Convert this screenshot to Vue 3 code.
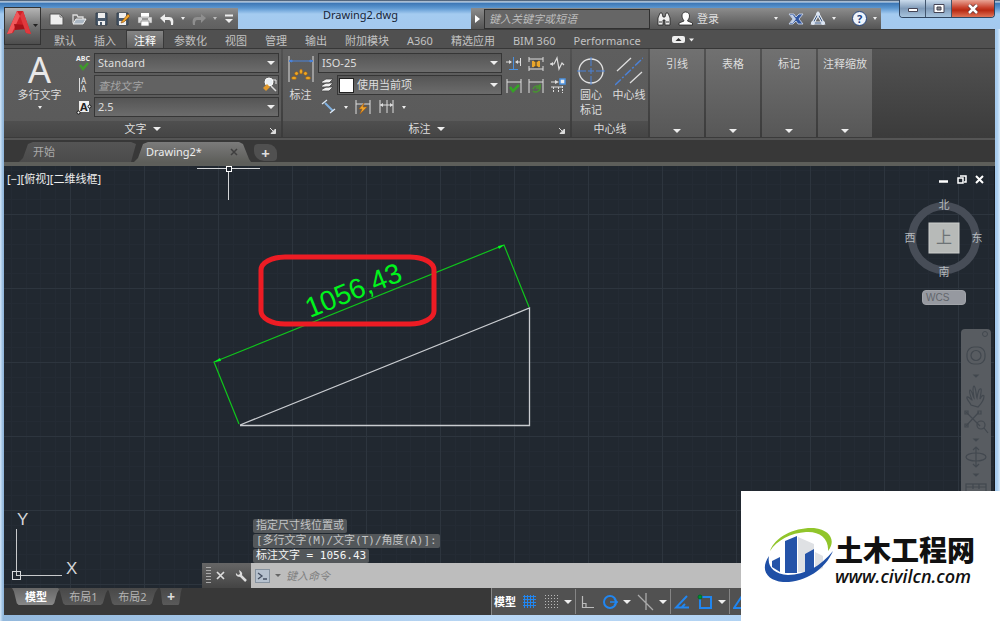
<script setup>
import { ref } from 'vue'

const tabs = ['默认', '插入', '注释', '参数化', '视图', '管理', '输出', '附加模块', 'A360', '精选应用', 'BIM 360', 'Performance']
const activeTab = ref('注释')
const collapsed = ['引线', '表格', '标记', '注释缩放']
const history = ['指定尺寸线位置或', '[多行文字(M)/文字(T)/角度(A)]:', '标注文字 = 1056.43']
const layouts = ['模型', '布局1', '布局2']
const activeLayout = ref('模型')
</script>

<template>
  <div class="window">
    <header class="header">
      <button class="app-button" aria-label="应用程序菜单">
        <svg width="36" height="37" viewBox="0 0 36 37">
          <path d="M2 26L12 3h6l8 23-5-1-2-5H11l-3 5z" fill="#cf2027" />
          <path d="M12 3l3 5-8 17-5 1z" fill="#f0575a" />
          <path d="M10 20l-1-4 12 1 1 4-12 1z" fill="#a51219" />
          <path d="M15 8l3-5 8 23-5-1z" fill="#e0383d" />
          <path d="M28 16h5l-2.500 3z" fill="#222" />
        </svg>
      </button>

      <div class="titlebar">
        <div class="quick">
          <button aria-label="新建"><svg width="16" height="16"><path d="M1 3h10l3 3v8H1z" fill="#eee" stroke="#555" /><path d="M11 3v3h3" fill="none" stroke="#777" /></svg></button>
          <button aria-label="打开"><svg width="16" height="16"><path d="M2 12V4h4l1 2h5v2" fill="none" stroke="#ddd" stroke-width="1.3" /><path d="M2 13l3-5h10l-3 5z" fill="#aab6c2" stroke="#eee" /></svg></button>
          <button aria-label="保存"><svg width="16" height="16"><path d="M3 2h11v12H3z" fill="#4a5a6c" stroke="#35404d" /><path d="M5 2h7v5H5zM5 10h7v4H5z" fill="#eee" /><path d="M7 11h2v3H7z" fill="#4a5a6c" /></svg></button>
          <button aria-label="另存为"><svg width="16" height="16"><path d="M2 2h11v12H2z" fill="#4a5a6c" stroke="#35404d" /><path d="M4 2h7v5H4zM4 10h7v4H4z" fill="#eee" /><path d="M7 10l6-7 2 2-6 6-3 1z" fill="#efa52c" stroke="#8c4e11" stroke-width=".6" /></svg></button>
          <button aria-label="打印"><svg width="16" height="16"><path d="M4 2h8v4H4z" fill="#fff" /><path d="M1 6h14v6H1z" fill="#ddd" stroke="#777" stroke-width=".5" /><path d="M4 10h8v5H4z" fill="#fff" stroke="#777" stroke-width=".7" /><path d="M5 8h6" stroke="#555" /></svg></button>
          <button aria-label="放弃"><svg width="16" height="16"><path d="M1 7l5-4v3h4c4 0 5 3 4 8h-2c0-3 0-5-3-5H6v3z" fill="#eee" /></svg></button>
          <i class="tri small"></i>
          <button aria-label="重做"><svg width="16" height="16"><path d="M15 7l-5-4v3H6c-4 0-5 3-4 8h2c0-3 0-5 3-5h3v3z" fill="#8f8f8f" /></svg></button>
          <i class="tri small dim"></i>
          <button class="narrow" aria-label="自定义"><svg width="12" height="16"><path d="M2 4.500h8" stroke="#eee" stroke-width="2" /><path d="M2 8h8l-4 4z" fill="#eee" /></svg></button>
        </div>
        <h1 class="title">Drawing2.dwg</h1>
        <div class="info">
          <button class="info-arrow" aria-label="展开搜索"><svg width="6" height="8"><path d="M0 0v8l5-4z" fill="#fff" /></svg></button>
          <input class="search" type="search" aria-label="搜索" placeholder="键入关键字或短语" />
          <button aria-label="查找"><svg width="16" height="16"><path d="M2 14V7l2-5h2l1 4h2l1-4h2l2 5v7H9V9H7v5z" fill="#eee" stroke="#222" stroke-width=".8" /><path d="M3 11h3M10 11h3" stroke="#333" /></svg></button>
          <button class="login"><svg width="15" height="16"><path d="M7.500 1c3 0 4 2 4 4 0 3-2 4-2 5l5 2v2H1v-2l5-2c0-1-2-2-2-5 0-2 1-4 3.500-4z" fill="#fff" stroke="#222" stroke-width=".8" /></svg>登录</button>
          <i class="tri small"></i>
          <button class="exchange" aria-label="交换"><svg width="16" height="16"><path d="M1 3h5l2 3 3-3h4l-4 5 4 5h-5l-2-3-3 3H1l4-5z" fill="#2f55a0" stroke="#c9d5ea" stroke-width=".9" /><path d="M2 4h3l3 4-3 4H2l3-4z" fill="#c3d0e6" /></svg></button>
          <button aria-label="连接"><svg width="16" height="16"><path d="M8 3l5 9H3z" fill="none" stroke="#e8eef7" stroke-width="3" /><path d="M8 3l5 9H3z" fill="none" stroke="#34527e" stroke-width="1" /><circle cx="8" cy="3" r="2" fill="#dce5f3" /><circle cx="3" cy="12" r="2" fill="#dce5f3" /><circle cx="13" cy="12" r="2" fill="#dce5f3" /></svg></button>
          <i class="tri small"></i>
          <button class="help" aria-label="帮助"><span>?</span></button>
          <i class="tri small"></i>
        </div>
        <div class="win-controls">
          <button aria-label="最小化"><svg width="12" height="8"><path d="M1.500 3.500h9v3h-9z" fill="#fff" stroke="#445" /></svg></button>
          <button aria-label="最大化"><svg width="12" height="10"><path d="M1 .5h10v8H1z" fill="#fff" stroke="#445" /><path d="M4 3h4v3H4z" fill="#888" stroke="#445" /></svg></button>
          <button class="close" aria-label="关闭"><svg width="12" height="10"><path d="M2 1l8 8M10 1L2 9" stroke="#633" stroke-width="4" /><path d="M2 1l8 8M10 1L2 9" stroke="#fff" stroke-width="2.500" /></svg></button>
        </div>
      </div>

      <nav class="tabs">
        <button v-for="t in tabs" :key="t" :class="{ active: t === activeTab }" @click="activeTab = t">{{ t }}</button>
        <button class="tab-toggle" aria-label="最小化功能区"><svg width="24" height="8"><rect x="0" y="0" width="13" height="7" rx="2" fill="#eee" /><path d="M3.500 5h6l-3-3z" fill="#333" /><path d="M17 2.500h5l-2.500 3z" fill="#eee" /></svg></button>
      </nav>
    </header>

    <section class="ribbon">
      <div class="panel text-panel">
        <div class="panel-body">
          <button class="big mtext">
            <span class="big-a">A</span><span>多行文字</span><i class="tri small"></i>
          </button>
          <div class="fields">
            <div class="field">
              <svg width="18" height="18"><text x="1" y="7" font-size="7" font-weight="700" fill="#eee">ABC</text><path d="M5 11l3 4 5-6" fill="none" stroke="#3f9a2b" stroke-width="2.500" /></svg>
              <span class="select"><select aria-label="文字样式"><option>Standard</option></select></span>
            </div>
            <div class="field">
              <svg width="18" height="18"><path d="M4.500 2v14" stroke="#ddd" /><text x="6" y="8" font-size="8" fill="#eee">A</text><text x="6" y="16" font-size="8" fill="#eee">A</text></svg>
              <span class="find"><input type="text" aria-label="查找文字" placeholder="查找文字" /><svg width="16" height="16"><circle cx="7" cy="5" r="4" fill="#e9eef2" stroke="#fff" /><path d="M9 9l5 5" stroke="#ddd" stroke-width="1.500" /><path d="M1 11l4-4 3 3-4 4z" fill="#e0982b" /><path d="M11 3h3v4" stroke="#eee" fill="none" /></svg></span>
            </div>
            <div class="field">
              <svg width="18" height="18"><rect x="4" y="3" width="10" height="11" fill="#eee" /><text x="5" y="13" font-size="11" font-weight="700" fill="#222">A</text><circle cx="3.500" cy="14.500" r="1.500" fill="#fff" stroke="#111" /><circle cx="14.500" cy="8.500" r="1.500" fill="#fff" stroke="#111" /></svg>
              <span class="select"><select aria-label="文字高度"><option>2.5</option></select></span>
            </div>
          </div>
        </div>
        <footer class="panel-title">文字<i class="tri"></i><svg class="launch" width="6" height="6"><path d="M0 0l4 4M5.500 1v4.500H1z" stroke="#ddd" fill="#ddd" /></svg></footer>
      </div>

      <div class="panel dim-panel">
        <div class="panel-body">
          <button class="big dimension">
            <svg width="28" height="32"><path d="M2 3v26M26 3v26" stroke="#ddd" /><path d="M2 8h24M2 8l3-1v2zM26 8l-3-1v2z" stroke="#4b82d8" fill="#4b82d8" /><g fill="#f0a822" stroke="#9c5d10" stroke-width=".5"><ellipse cx="14" cy="18.500" rx="1.500" ry="2.500" /><circle cx="9.500" cy="20.500" r="1.800" /><circle cx="18.500" cy="20.500" r="1.800" /><ellipse cx="7" cy="25" rx="2.500" ry="1.500" /><ellipse cx="21" cy="25" rx="2.500" ry="1.500" /></g></svg>
            <span>标注</span>
          </button>
          <div class="dim-fields">
            <span class="select"><select aria-label="标注样式"><option>ISO-25</option></select></span>
            <div class="field">
              <svg width="18" height="18"><path d="M3 14l5-3h7l-4 4H4zM3 10l5-3h7l-4 4H4zM3 6l5-3h7l-4 4H4z" fill="#f1f1f1" stroke="#444" stroke-width=".8" /></svg>
              <span class="select layer"><i class="swatch"></i><select aria-label="标注图层"><option>使用当前项</option></select></span>
            </div>
            <div class="dim-tools">
              <button aria-label="线性"><svg width="18" height="18"><path d="M5 5l8 8" stroke="#7fb0e0" stroke-width="2" /><path d="M2 6l5-4M10 15l5-4" stroke="#dce8f4" stroke-width="1.300" /></svg></button>
              <i class="tri small"></i>
              <button aria-label="快速标注"><svg width="18" height="18"><path d="M2 2v14M16 2v14M2 6h14" stroke="#ddd" /><path d="M10 5l-5 6h3l-2 5 7-7h-4z" fill="#efa52c" stroke="#a75b0e" stroke-width=".6" /></svg></button>
              <button aria-label="连续"><svg width="18" height="18"><path d="M2 2v13M9 2v13M15 2v13M2 7h13" stroke="#ddd" /><path d="M2 7l3-2v4zM15 7l-3-2v4z" fill="#ddd" /></svg></button>
              <i class="tri small"></i>
            </div>
          </div>
          <div class="icon-grid">
            <button aria-label="打断"><svg width="16" height="16"><path d="M0 6h5M10 6h4M14.500 2v8" stroke="#ddd" /><path d="M3 4l3 2-3 2zM12 4L9 6l3 2z" fill="#ddd" /><path d="M7.500 1v12M3 13.500h9" stroke="#4b91df" /></svg></button>
            <button aria-label="调整间距"><svg width="16" height="16"><path d="M1 1v5M15 1v5M1 3h14M1 10v5M15 10v5M1 13h14" stroke="#ddd" /><path d="M4 5h8v6H4z" fill="#e9a62b" /><path d="M8 5v6M6 5h4M6 11h4" stroke="#333" /></svg></button>
            <button aria-label="折弯标注"><svg width="16" height="16"><path d="M0 8h4l3-6 2 11 3-6 2 2" fill="none" stroke="#ddd" stroke-width="1.200" /><path d="M0 8l3-2v4z" fill="#ddd" /></svg></button>
            <button aria-label="检验"><svg width="16" height="16"><path d="M1 1v14M15 1v14M1 4h14" stroke="#ddd" /><path d="M4 9l3 4 6-6" fill="none" stroke="#35a326" stroke-width="2.500" /></svg></button>
            <button aria-label="更新"><svg width="16" height="16"><path d="M1 1v14M15 1v14M1 4h14" stroke="#ddd" /><path d="M5 11c1-3 5-4 7-2M12 11c-1 3-5 4-7 2M12 6v4H8" fill="none" stroke="#47972f" stroke-width="1.500" /></svg></button>
            <button aria-label="重新关联"><svg width="16" height="16"><path d="M1 4h6M1 9h12" stroke="#ddd" /><path d="M3.500 9v6M8.500 9v6M12.500 8v7" stroke="#ddd" stroke-dasharray="2 1" /><path d="M5 2l4 2-4 2z" fill="#ddd" /><path d="M10 1h5v5h-5z" fill="#eee" stroke="#4b91df" stroke-width="1.500" /></svg></button>
          </div>
        </div>
        <footer class="panel-title">标注<i class="tri"></i><svg class="launch" width="6" height="6"><path d="M0 0l4 4M5.500 1v4.500H1z" stroke="#ddd" fill="#ddd" /></svg></footer>
      </div>

      <div class="panel center-panel">
        <div class="panel-body">
          <button class="big"><svg width="28" height="33"><circle cx="14" cy="18" r="12" fill="none" stroke="#e2e2e2" stroke-width="1.300" /><path d="M0 18h9M11 18h6M19 18h9M14 4v9M14 15v6M14 23v9" stroke="#4b82d8" /></svg><span>圆心<br />标记</span></button>
          <button class="big"><svg width="28" height="33"><path d="M2 18L16 5M15 30L27 19" stroke="#ddd" stroke-width="1.300" /><path d="M0 32L28 5" stroke="#4b82d8" stroke-width="1.500" stroke-dasharray="8 2 2 2" /></svg><span>中心线</span></button>
        </div>
        <footer class="panel-title">中心线</footer>
      </div>

      <button v-for="c in collapsed" :key="c" class="collapsed"><span>{{ c }}</span><i class="tri"></i></button>
    </section>

    <nav class="doc-tabs">
      <button class="doc start">开始</button>
      <button class="doc current">Drawing2*<svg width="8" height="8"><path d="M1 1l6 6M7 1L1 7" stroke="#3f3f3f" stroke-width="1.500" /></svg></button>
      <button class="doc-add" aria-label="新图形">+</button>
    </nav>

    <main class="canvas">
      <svg class="drawing">
        <defs>
          <pattern id="grid" width="74" height="74" patternUnits="userSpaceOnUse" x="70" y="66">
            <path d="M15.500 0v74M30.500 0v74M44.500 0v74M59.500 0v74M0 15.500h74M0 30.500h74M0 44.500h74M0 59.500h74" stroke="#242b34" />
            <path d="M.5 0v74M0 .5h74" stroke="#2d353e" />
          </pattern>
        </defs>
        <g transform="translate(-4 -166)">
          <rect x="4" y="166" width="100%" height="100%" fill="url(#grid)" />
          <path d="M240 425L529.500 308V425.500H240" fill="none" stroke="#c9ccd0" stroke-width="1.300" />
          <path d="M239 424L214 362L504 245L529 307" fill="none" stroke="#10c51c" stroke-width="1.200" />
          <path d="M214 362l6-4 1 3zM504 245l-6 1 1 3z" fill="#00ff1e" />
          <text class="dim-text" transform="translate(310 318) rotate(-22)">1056,43</text>
          <rect x="261" y="257" width="173" height="67" rx="24" ry="13" fill="none" stroke="#ed1c24" stroke-width="5" />
          <path d="M197 168.500h29M232 168.500h28M228.500 172v28" stroke="#d4d6d8" />
          <rect x="226.500" y="166.500" width="5" height="5" fill="none" stroke="#fff" />
          <path d="M16.500 529v46M16 575.500h46" stroke="#c8cacc" />
          <rect x="12.500" y="571.500" width="8" height="8" fill="none" stroke="#d8dadc" />
          <text class="axis" x="17" y="525">Y</text>
          <text class="axis" x="66" y="574">X</text>
        </g>
      </svg>
      <div class="view-label">[−][俯视][二维线框]</div>
      <div class="view-controls">
        <button aria-label="最小化视口"><svg width="10" height="10"><path d="M0 6.500h9" stroke="#fff" stroke-width="2.500" /></svg></button>
        <button aria-label="还原视口"><svg width="10" height="10"><path d="M1 3h5v5H1zM3 1h6v6H7" fill="none" stroke="#fff" stroke-width="1.500" /></svg></button>
        <button aria-label="关闭视口"><svg width="10" height="10"><path d="M1 1l7 7M8 1L1 8" stroke="#fff" stroke-width="2" /></svg></button>
      </div>
      <div class="viewcube">
        <svg width="80" height="80">
          <circle cx="40" cy="40" r="32" fill="none" stroke="#474d57" stroke-width="8" />
          <g class="compass"><text x="40" y="11">北</text><text x="6" y="44">西</text><text x="73" y="44">东</text><text x="40" y="78">南</text></g>
          <rect x="25" y="25" width="30" height="30" fill="#b7bab8" stroke="#cbcdcb" />
          <text x="40" y="45" class="cube-face">上</text>
        </svg>
        <button class="wcs">WCS</button>
      </div>
      <div class="navbar">
        <svg width="30" height="200" fill="none" stroke="#42484f" stroke-width="1.200">
          <circle cx="24" cy="5" r="2.500" stroke-width="1" />
          <rect x="6" y="18" width="18" height="17" rx="7" /><circle cx="15" cy="26.500" r="5" />
          <path d="M13 46h4l-2 2z" fill="#3e444b" />
          <path d="M10 76c-2-4-5-6-4-8 2-1 4 3 5 3-2-5-3-9-2-10 2 0 3 7 4 8-1-6-2-11 0-12 2 1 2 10 3 12 1-6 2-10 4-9 1 1-1 8-1 10 2-4 3-4 4-3 0 4-4 9-6 11z" />
          <path d="M5 83l14 14M18 83L5 97" /><circle cx="20" cy="96" r="4" /><path d="M23 99l4 5M4 82h3v3H4zM17 82h3v3h-3zM4 95h3v3H4z" />
          <path d="M13 110h4l-2 2z" fill="#3e444b" />
          <path d="M15 118v20M12 121l3-3 3 3M12 135l3 3 3-3" /><ellipse cx="15" cy="128" rx="10" ry="4" />
          <path d="M13 145h4l-2 2z" fill="#3e444b" />
          <rect x="5" y="155" width="20" height="14" /><path d="M5 158h20M12 155v5M18 155v5" />
        </svg>
      </div>
      <div class="command">
        <p v-for="line in history" :key="line"><span>{{ line }}</span></p>
        <div class="command-bar">
          <div class="command-tools">
            <i class="grip"></i>
            <button aria-label="关闭命令行"><svg width="9" height="9"><path d="M1 1l7 7M8 1L1 8" stroke="#ddd" stroke-width="1.700" /></svg></button>
            <button aria-label="自定义"><svg width="14" height="14"><path d="M6 6l6 6" stroke="#ddd" stroke-width="2.500" /><path d="M2 4c-1 4 5 5 6 2 1-2-1-4-3-5l1 4-2 1z" fill="#ddd" /></svg></button>
          </div>
          <svg width="16" height="14"><rect x=".5" y=".5" width="14" height="13" fill="#b6c1ce" stroke="#8793a0" /><path d="M3 4l4 3-4 3M8 10h4" fill="none" stroke="#444e60" stroke-width="1.300" /></svg>
          <i class="tri small dark"></i>
          <input type="text" aria-label="命令" placeholder="键入命令" />
        </div>
      </div>
    </main>

    <footer class="statusbar">
      <nav class="layouts">
        <button v-for="l in layouts" :key="l" :class="{ active: l === activeLayout }" @click="activeLayout = l">{{ l }}</button>
        <button class="add" aria-label="新布局">+</button>
      </nav>
      <div class="status">
        <button class="model">模型</button>
        <button aria-label="栅格"><svg width="16" height="16"><path d="M1 2.500h13M1 5.500h13M1 8.500h13M1 11.500h13M2.500 1v13M5.500 1v13M8.500 1v13M11.500 1v13" stroke="#2186f0" /></svg></button>
        <button class="snap" aria-label="捕捉"><svg width="16" height="16"><path d="M1 1.500h14M1 4.500h14M1 7.500h14M1 10.500h14M1 13.500h14" stroke="#bbb" stroke-dasharray="1 2" /></svg></button>
        <i class="tri"></i><i class="sep"></i>
        <button aria-label="正交"><svg width="16" height="16"><path d="M3.500 2v11.500H15M3 9.500h4v4" fill="none" stroke="#bbb" stroke-width="1.200" /></svg></button>
        <button class="polar" aria-label="极轴追踪"><svg width="16" height="16"><circle cx="7" cy="8" r="6" fill="none" stroke="#2186f0" stroke-width="2" /><path d="M7 8h8M11 5l3 3-3 3" fill="none" stroke="#2186f0" stroke-width="1.300" /></svg></button>
        <i class="tri"></i>
        <button class="iso" aria-label="等轴测"><svg width="18" height="18"><path d="M1 2l15 15M9 0v17" stroke="#aaa" stroke-width="1.300" /></svg></button>
        <i class="tri"></i><i class="sep"></i>
        <button aria-label="对象捕捉追踪"><svg width="16" height="16"><path d="M13 2L2 13.500h13M11 10l-3 3" fill="none" stroke="#2186f0" stroke-width="2" /></svg></button>
        <button class="osnap" aria-label="对象捕捉"><svg width="18" height="16"><rect x="4" y="3" width="11" height="11" fill="none" stroke="#2186f0" stroke-width="2" /><circle cx="4" cy="3" r="2" fill="#092" stroke="#063" /></svg></button>
        <i class="tri"></i><i class="sep"></i>
        <button aria-label="注释可见性"><svg width="16" height="16"><path d="M1 14L9 2l5 12z" fill="none" stroke="#2186f0" stroke-width="2" /></svg></button>
      </div>
    </footer>

    <a class="brand" href="#" aria-label="土木工程网">
      <svg width="72" height="60" viewBox="0 0 72 60">
        <path d="M35 11l16 7v7l-5 3v18H35z" fill="#dfe1e4" />
        <path d="M52 26l8 4v12l-8 4z" fill="#dfe1e4" />
        <path d="M9 35l8-4v15l-8-5zM22 15l12-5v37H22zM42 28l9-5v22l-9 2z" fill="#2453a8" />
        <path d="M7 25C12 10 33 1 51 2c17 2 22 13 14 23C66 12 56 5 43 6 28 7 14 14 7 25z" fill="#91c52b" />
        <path d="M6 30C-3 43 3 54 20 56c21 1 42-12 50-31C58 40 42 49 25 49 11 48 4 41 6 30z" fill="#1e4fa6" />
      </svg>
      <span class="brand-text"><strong>土木工程网</strong><em>www.civilcn.com</em></span>
    </a>
  </div>
</template>

<style>
body { margin: 0; background: #b9d3ee; }
</style>

<style scoped>
* { box-sizing: border-box; }
.window {
  position: relative;
  display: flex;
  flex-direction: column;
  min-height: 100vh;
  padding: 0 5px 6px 4px;
  overflow: hidden;
  background: linear-gradient(90deg, #d2e6f8, #93b8dc 3px, #b9d7f5 50%, #a8cdf0 calc(100% - 3px), #d9ecfc);
  color: #dedede;
  font: 12px/14px "Noto Sans", "Noto Sans CJK SC", sans-serif;
}
button { border: 0; padding: 0; background: none; color: inherit; font: inherit; display: flex; align-items: center; justify-content: center; }
button svg { flex: none; }
input, select { font: inherit; color: inherit; min-width: 0; border-radius: 0; }
.tri { flex: none; width: 0; height: 0; border: 4px solid transparent; border-top: 4px solid #eee; border-bottom: 0; }
.tri.small { border-width: 3px 2px 0; }
.tri.dim { opacity: .6; }
.tri.dark { border-width: 3px 3px 0; border-top-color: #666; }

.header { display: grid; grid-template: 29px 19px / 37px 1fr; margin: 0 -5px 0 -4px; padding: 0 5px 0 4px; background: linear-gradient(#293e58, #d4e5f6 2px, #3c76b4 3px, #5b96d0 8px, #a4cbf0 14px, #a4c9ee 29px, transparent 29px); }
.app-button { grid-area: 1 / 1 / 3 / 2; align-self: start; z-index: 1; margin-top: 7px; height: 38px; border: 1px solid #333; background: linear-gradient(#b5b5b5, #747474 50%, #4d4d4d); }
.titlebar { grid-area: 1 / 2; display: flex; align-items: flex-start; }
.quick { display: flex; align-items: center; justify-content: space-between; width: 197px; height: 21px; margin-top: 8px; padding: 0 3px 0 8px; background: linear-gradient(#8f8f8f, #666 60%, #606060); }
.title { flex: 1; margin: 7px 0 0 12px; text-align: center; font-size: 11px; line-height: 16px; font-weight: 400; color: #172436; }
.info { display: flex; align-items: center; gap: 6px; width: 410px; height: 21px; margin-top: 8px; padding-right: 4px; background: linear-gradient(#8c8c8c, #646464 70%, #555); font-size: 11px; }
.info-arrow { width: 6px; margin: 0 0 0 4px; }
.search { width: 166px; height: 20px; margin-left: -3px; padding: 0 4px; border: 1px solid #303030; background: #666; font-style: italic; }
.search::placeholder { color: #bcbcbc; opacity: 1; }
.login { gap: 4px; margin: 0 auto 0 0; }
.exchange { margin-left: 4px; }
.help { width: 15px; height: 15px; margin-left: 10px; border-radius: 50%; border: 1px solid #25457e; background: #eef4fc; color: #1c3f82; font-weight: 700; }
.win-controls { display: flex; height: 18px; margin-left: 18px; border: 1px solid #304661; border-top: 0; border-radius: 0 0 4px 4px; overflow: hidden; }
.win-controls button { width: 26px; background: linear-gradient(#cadbec, #7f9ab8 50%, #a7c4de); border-right: 1px solid #42566e; }
.win-controls .close { width: 42px; border: 0; background: linear-gradient(#e9a596, #c8412c 45%, #b82912 60%, #df7356); }
.tabs { grid-area: 2 / 1 / 3 / 3; display: flex; padding-left: 41px; background: #505050; border-top: 1px solid #3c3c3c; color: #c2c2c2; font-size: 11px; }
.tabs button { margin: 0 1px; padding: 3px 7px 0; border: 1px solid transparent; border-bottom: 0; white-space: nowrap; }
.tabs .active { background: linear-gradient(#858585, #606060); border-color: #393939; color: #fff; }
.tabs .tab-toggle { padding: 0 20px; }

.ribbon { display: flex; gap: 2px; height: 90px; padding-bottom: 1px; background: linear-gradient(#525252, #3b3b3b); border-top: 1px solid #373737; font-size: 11px; }
.panel { display: flex; flex-direction: column; background: linear-gradient(#5e5e5e, #5a5a5a); }
.text-panel { width: 277px; }
.dim-panel { width: 287px; }
.center-panel { width: 76px; }
.panel-body { display: flex; flex: 1; padding-top: 4px; }
.panel-title { display: flex; position: relative; align-items: center; justify-content: center; gap: 6px; height: 16px; background: linear-gradient(#4f4f4f, #454545); }
.launch { position: absolute; right: 5px; bottom: 3px; }
.big { flex-direction: column; justify-content: flex-start; }
.mtext { width: 71px; }
.big-a { height: 35px; font: 36px/34px "Noto Sans", sans-serif; color: #e8e8e8; }
.mtext .tri { margin-top: 4px; }
.fields { display: flex; flex: 1; flex-direction: column; gap: 2px; padding-right: 2px; }
.field { display: flex; gap: 1px; align-items: center; }
.select { position: relative; display: flex; flex: 1; align-items: center; height: 20px; border: 1px solid #363636; background: linear-gradient(#555, #6c6c6c); }
.select::after { content: ""; position: absolute; right: 3px; top: 7px; border: 4px solid transparent; border-top-color: #eee; border-bottom: 0; }
.select select { flex: 1; width: 100%; height: 18px; padding: 0 3px; appearance: none; border: 0; background: none; }
.find { display: flex; flex: 1; align-items: center; height: 20px; border: 1px solid #3b3b3b; background: #626262; }
.find input { flex: 1; height: 18px; padding: 0 3px; border: 0; background: none; font-style: italic; }
.find input::placeholder { color: #a5a5a5; opacity: 1; }
.dimension { width: 35px; }
.dimension span { margin-top: 3px; }
.dim-fields { display: flex; flex-direction: column; gap: 2px; width: 184px; }
.dim-fields > .select { flex: 0 0 20px; }
.swatch { flex: none; width: 15px; height: 15px; margin-left: 1px; border: 1px solid #222; background: #fff; }
.dim-tools { display: flex; align-items: center; gap: 6px; height: 20px; padding-left: 2px; }
.icon-grid { display: grid; grid-template: 22px 22px / 22px 22px 22px; margin-left: 1px; }
.center-panel .big { flex: 1; line-height: 15px; }
.center-panel .big span { margin-top: 1px; white-space: nowrap; }
.collapsed { flex-direction: column; justify-content: space-between; width: 54px; padding: 8px 0 4px; background: linear-gradient(#717171, #575757); white-space: nowrap; }

.doc-tabs { display: flex; align-items: flex-end; height: 28px; padding-left: 15px; border-top: 2px solid #555; border-bottom: 4px solid #5d5e5a; background: #383838; }
.doc { height: 20px; font-size: 11px; background: linear-gradient(#555, #4b4b4b); }
.start { justify-content: flex-start; width: 117px; padding-left: 14px; color: #aaa; clip-path: polygon(0 100%, 4px 80%, 9px 10%, 14px 0, 112px 0, 117px 10%, 112px 100%); }
.current { justify-content: space-between; width: 117px; margin-left: -2px; padding: 0 13px 0 12px; color: #eee; background: linear-gradient(#7b7b7b, #5d5e5a); clip-path: polygon(0 100%, 4px 80%, 9px 10%, 14px 0, 105px 0, 109px 10%, 115px 85%, 117px 100%); }
.doc-add { width: 23px; height: 17px; margin: 0 0 1px 3px; border-radius: 4px 9px 4px 10px; background: #505050; font-size: 15px; font-weight: 700; }

.canvas { position: relative; flex: 1; min-height: 422px; background: #212830; overflow: hidden; border-right: 1px solid #15191f; }
.drawing { position: absolute; inset: 0; width: 100%; height: 100%; }
.dim-text { fill: #00f51c; font: 28px "Liberation Sans", sans-serif; }
.axis { fill: #d3d5d7; font: 17px "Liberation Sans", sans-serif; }
.view-label { position: absolute; left: 3px; top: 6px; font-size: 11px; color: #eee; }
.view-controls { position: absolute; display: flex; gap: 8px; right: 9px; top: 9px; }
.viewcube { position: absolute; display: flex; flex-direction: column; align-items: center; right: 10px; top: 32px; }
.viewcube svg { overflow: visible; }
.compass { fill: #b5b9bd; font-size: 11px; text-anchor: middle; }
.cube-face { fill: #6d7376; font-size: 16px; text-anchor: middle; }
.wcs { justify-content: flex-start; width: 44px; height: 15px; margin-top: 12px; padding-left: 3px; border: 1px solid #a1a4a9; border-radius: 4px; background: #9699a0; color: #62666c; font: 10px "Liberation Sans", sans-serif; }
.navbar { position: absolute; right: 3px; top: 163px; width: 30px; height: 200px; border-radius: 4px; background: #585c61; }
.command { position: absolute; left: 198px; right: 0; bottom: 0; }
.command p { margin: 0 0 0 51px; height: 15px; font: 11px/14px "DejaVu Sans Mono", "Noto Sans CJK SC", monospace; color: #c2c4c5; white-space: pre; }
.command p span { display: inline-block; height: 14px; padding: 0 3px; background: #53575a; border-radius: 2px; }
.command p:last-of-type { height: 14px; color: #f5f5f5; }
.command-bar { display: flex; align-items: center; gap: 4px; height: 25px; background: #bdbdbd; font-size: 12px; }
.command-tools { display: flex; align-items: center; gap: 9px; width: 49px; height: 25px; padding-left: 4px; background: linear-gradient(#666, #444); }
.command-tools button { flex: none; }
.grip { flex: none; width: 5px; height: 17px; margin-right: -4px; background: repeating-linear-gradient(#aaa 0 1px, transparent 1px 3px); }
.command-bar input { flex: 1; height: 22px; padding: 0 1px; border: 0; background: none; font-style: italic; font-size: 11px; color: #555; }
.command-bar input::placeholder { color: #808080; opacity: 1; }

.statusbar { display: flex; justify-content: space-between; height: 27px; background: #383838; font-size: 11px; }
.layouts { display: flex; align-items: flex-start; padding-left: 8px; }
.layouts button { width: 51px; height: 17px; margin-right: -2px; background: linear-gradient(#484848, #5a5a5a); color: #b5b5b5; clip-path: polygon(0 0, 100% 0, 94% 30%, 88% 90%, 84% 100%, 14% 100%, 10% 90%, 4% 20%); }
.layouts .active { width: 48px; color: #fff; font-weight: 700; background: linear-gradient(#666, #888); }
.layouts .add { width: 22px; margin-left: 4px; font-weight: 700; font-size: 14px; color: #ddd; }
.status { display: flex; align-items: center; gap: 4px; width: 504px; padding-left: 2px; border-left: 1px solid #888; background: #515151; }
.status .model { font-weight: 700; color: #fff; margin-right: 2px; }
.status .snap { margin-left: 2px; }
.status .polar { margin-left: 4px; }
.status .iso { margin-left: 2px; }
.status .osnap { margin-left: 2px; }
.status .sep { width: 1px; height: 25px; background: #858585; margin: 0 -1px; }

.brand { position: absolute; right: 0; bottom: 0; display: flex; align-items: center; gap: 0; width: 259px; height: 130px; padding-left: 22px; background: #fff; color: #111; text-decoration: none; }
.brand-text { display: flex; flex-direction: column; white-space: nowrap; padding-top: 8px; }
.brand strong { font: 900 28px/32px "Noto Sans CJK SC", sans-serif; }
.brand em { font: italic 600 18px/22px "Open Sans", sans-serif; }
</style>
